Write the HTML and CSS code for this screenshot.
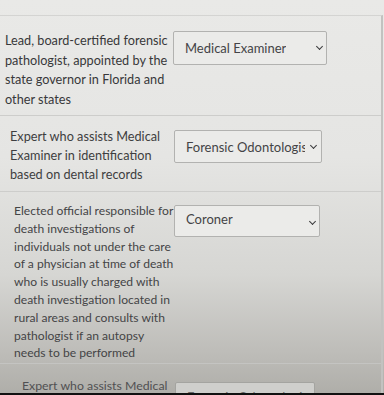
FILE: index.html
```html
<!DOCTYPE html>
<html lang="en">
<head>
    <meta charset="UTF-8">
    <title>Matching</title>
    <link rel="stylesheet" href="styles.css">
</head>
<body>
    <div class="question">
        <div class="match-row row-one">
            <div class="prompt">Lead, board-certified forensic<br>pathologist, appointed by the<br>state governor in Florida and<br>other states</div>
            <div class="select select-one"><span>Medical Examiner</span><i class="chev"></i></div>
        </div>
        <div class="match-row row-two">
            <div class="prompt">Expert who assists Medical<br>Examiner in identification<br>based on dental records</div>
            <div class="select select-two"><span>Forensic Odontologist</span><i class="chev"></i></div>
        </div>
        <div class="match-row row-three">
            <div class="prompt">Elected official responsible for<br>death investigations of<br>individuals not under the care<br>of a physician at time of death<br>who is usually charged with<br>death investigation located in<br>rural areas and consults with<br>pathologist if an autopsy<br>needs to be performed</div>
            <div class="select select-three"><span>Coroner</span><i class="chev"></i></div>
        </div>
        <div class="match-row row-four">
            <div class="prompt">Expert who assists Medical</div>
            <div class="select select-four"><span>Forensic Odontologist</span></div>
        </div>
    </div>
</body>
</html>
```

FILE: styles.css
```css
html {
    background: #111;
    height: 100%;
}
body {
    margin: 0;
    height: calc(100% - 2px);
    background: linear-gradient(180deg, #e9e9e7 0%, #e5e5e3 40%, #d6d6d3 70%, #bdbcb8 90%, #afaea9 100%);
    font-family: Lato, "Open Sans", sans-serif;
    color: #38383a;
    overflow: hidden;
}
.question {
    margin-top: 15px;
    border-top: 1px solid #d4d4d2;
    border-right: 2px solid #c2c2c0;
    margin-right: 1px;
}
.match-row {
    display: flex;
    align-items: flex-start;
    border-bottom: 1px solid #cdcdcb;
}
.prompt {
    font-size: 12.7px;
    line-height: 19.5px;
    white-space: nowrap;
    flex: none;
}
.select {
    display: flex;
    align-items: center;
    justify-content: space-between;
    box-sizing: border-box;
    border: 1px solid #b2b2b0;
    border-radius: 2px;
    background: #ebebe9;
    font-size: 13px;
    color: #444446;
    white-space: nowrap;
    overflow: hidden;
}
.select span {
    overflow: hidden;
}
.chev {
    flex: none;
    width: 4px;
    height: 4px;
    border-right: 1.8px solid #3a3a3c;
    border-bottom: 1.8px solid #3a3a3c;
    transform: rotate(45deg);
    margin: -3px 4px 0 6px;
}

.row-one {
    padding: 15px 0 6px 5px;
}
.row-one .prompt {
    width: 168px;
}
.select-one {
    width: 154px;
    height: 34px;
    padding-left: 11px;
}

.row-two {
    padding: 11px 0 7px 10px;
}
.row-two .prompt {
    width: 164px;
    line-height: 19px;
    color: #3e3e40;
}
.select-two {
    width: 148px;
    height: 33px;
    padding: 0 1px 0 11px;
    margin-top: 3px;
}
.select-two span {
    width: 120px;
}

.row-three {
    padding: 10px 0 1px 14px;
    border-bottom-color: #c4c4c2;
}
.row-three .prompt {
    width: 160px;
    font-size: 12.1px;
    line-height: 17.8px;
    color: #444446;
}
.select-three {
    width: 146px;
    height: 32px;
    margin-top: 3px;
    padding-left: 11px;
    align-items: flex-start;
    padding-top: 5px;
}
.select-three .chev {
    margin-top: 8px;
}

.row-four {
    padding: 13px 0 0 22px;
    border-bottom: none;
}
.row-four .prompt {
    width: 153px;
    font-size: 12.3px;
    line-height: 18px;
    color: #505052;
}
.select-four {
    width: 140px;
    height: 30px;
    margin-top: 5px;
    padding-left: 11px;
    color: #666;
    background: #cfcfcc;
    border-color: #a4a4a0;
}
```
